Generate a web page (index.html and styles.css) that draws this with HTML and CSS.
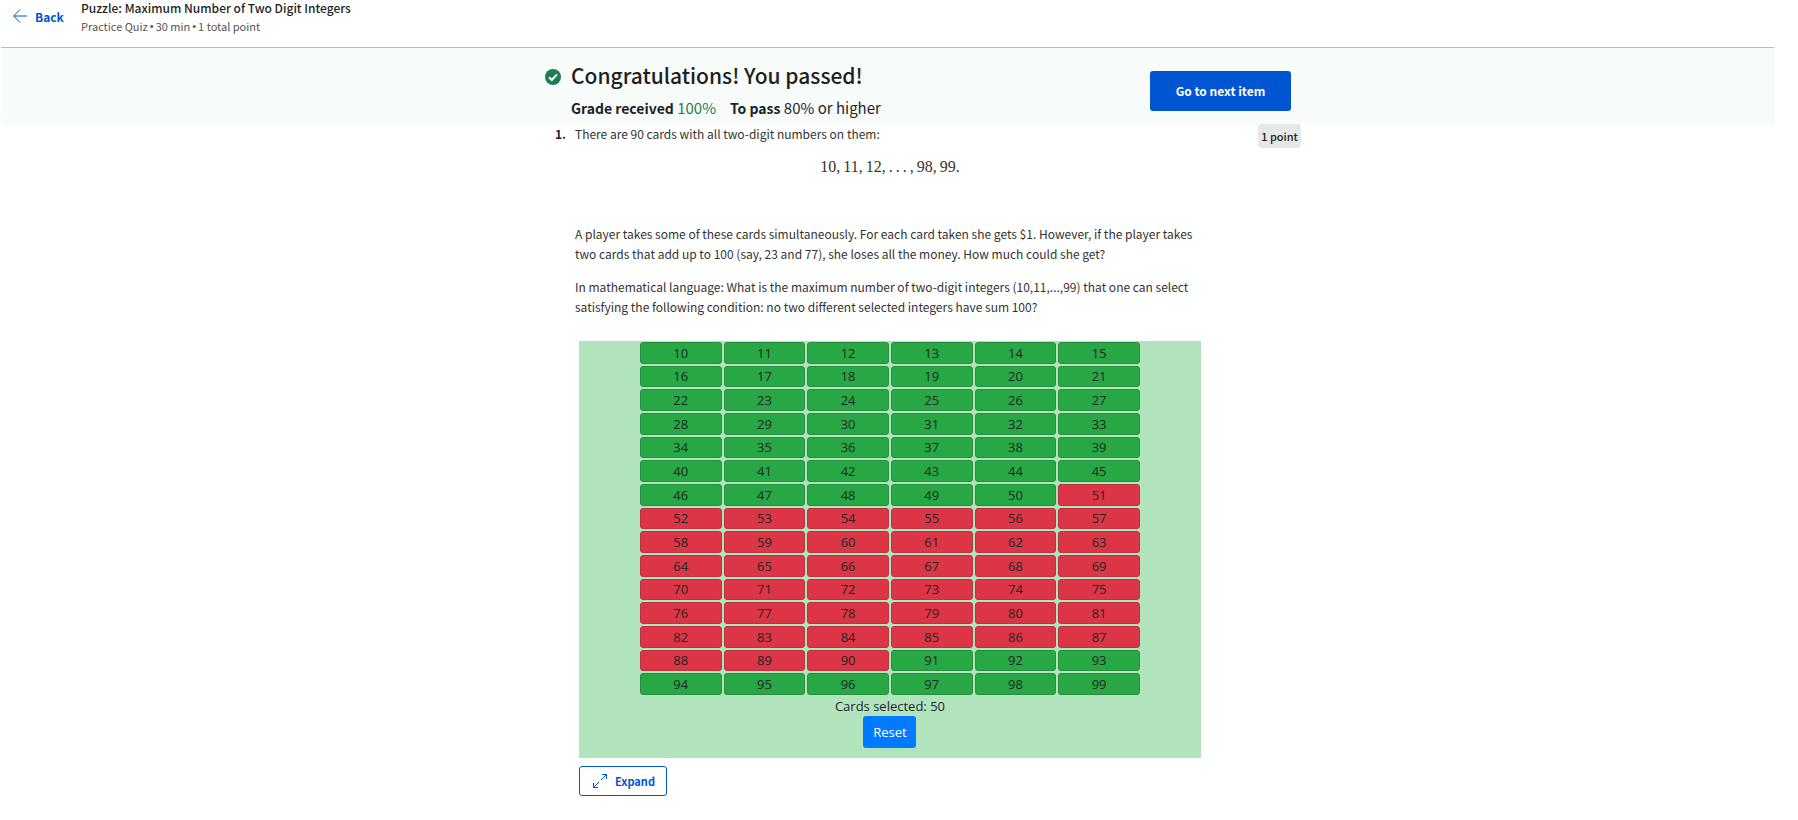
FILE: index.html
```html
<!DOCTYPE html>
<html lang="en">
<head>
<meta charset="utf-8">
<title>Puzzle: Maximum Number of Two Digit Integers</title>
<link rel="stylesheet" href="styles.css">
</head>
<body>
<header class="topbar">
  <a class="back" href="#">
    <svg class="back-icon" viewBox="0 0 14 14" aria-hidden="true"><path d="M14 7H.8M7 .5.7 7 7 13.5"/></svg>
    Back
  </a>
  <div class="title-block">
    <h1 class="title">Puzzle: Maximum Number of Two Digit Integers</h1>
    <p class="subtitle"><span>Practice Quiz</span><span class="dot">•</span><span>30 min</span><span class="dot">•</span><span>1 total point</span></p>
  </div>
</header>
<main>
  <section class="band banner">
    <div class="column banner-row">
      <svg class="check" viewBox="0 0 16 16" aria-hidden="true"><circle cx="8" cy="8" r="8"/><path d="M4 8.3 6.8 11 12 5.4"/></svg>
      <div class="result">
        <h2 class="congrats">Congratulations! You passed!</h2>
        <p class="grade"><span><b class="label">Grade received</b> <span class="score">100%</span></span><span><b class="label">To pass</b> 80% or higher</span></p>
      </div>
      <button class="next" type="button">Go to next item</button>
    </div>
  </section>
  <section class="band">
    <div class="column question">
      <span class="number">1.</span>
      <div class="body">
        <p class="text">There are 90 cards with all two-digit numbers on them:</p>
        <p class="formula"><span>10,</span><span>11,</span><span>12,</span><span>.</span><span>.</span><span>.</span><span>,</span><span>98,</span><span>99.</span></p>
        <p class="text">A player takes some of these cards simultaneously. For each card taken she gets $1. However, if the player takes<br>two cards that add up to 100 (say, 23 and 77), she loses all the money. How much could she get?</p>
        <p class="text">In mathematical language: What is the maximum number of two-digit integers (10,11,...,99) that one can select<br>satisfying the following condition: no two different selected integers have sum 100?</p>
        <div class="widget">
          <div class="panel">
            <div class="cards" id="cards"></div>
            <p class="count">Cards selected: <span id="count">50</span></p>
            <button class="reset" id="reset" type="button">Reset</button>
          </div>
          <button class="expand" type="button">
            <svg class="expand-icon" viewBox="0 0 14 14" aria-hidden="true"><path d="M9 .5h4.500V5M13.500.5 8 6M5 13.500H.5V9M.5 13.500 6 8"/></svg>
            Expand
          </button>
        </div>
      </div>
      <span class="points">1 point</span>
    </div>
  </section>
</main>
<script src="script.js"></script>
</body>
</html>
```
FILE: styles.css
```css
* {
  box-sizing: border-box;
}

body {
  margin: 0;
  padding: 0 24px 0 1px;
  background: #fff;
  color: #1f1f1f;
  font-family: "Noto Sans CJK SC", "Noto Sans", sans-serif;
  font-size: 12px;
}

h1, h2, p {
  margin: 0;
}

button {
  font-family: inherit;
  cursor: pointer;
}

.topbar {
  display: flex;
  height: 48px;
  padding-left: 12px;
  border-bottom: 1px solid #bbb;
}

.back {
  display: flex;
  align-items: center;
  gap: 8px;
  width: 68px;
  height: 32px;
  color: #0056d2;
  font-size: 12px;
  font-weight: 700;
  text-decoration: none;
}

.back-icon,
.expand-icon {
  width: 14px;
  height: 14px;
  fill: none;
  stroke: #0056d2;
}

.title {
  font-size: 12px;
  font-weight: 500;
  line-height: 16px;
}

.subtitle {
  display: flex;
  gap: 2px;
  color: #555;
  font-size: 11px;
  line-height: 20px;
}

.dot {
  font-family: "Liberation Sans", sans-serif;
}

.band {
  display: grid;
  grid-template-columns: 23fr minmax(0, 756px) 20fr;
}

.column {
  grid-column: 2;
  display: flex;
  align-items: flex-start;
}

.banner {
  background: #f7fbfa;
}

.banner-row {
  padding: 11px 10px 0 0;
}

.check {
  width: 16px;
  height: 16px;
  margin: 10px 10px 0 0;
  fill: #1d7c50;
}

.check path {
  fill: none;
  stroke: #fff;
  stroke-width: 2;
}

.result {
  flex: 1;
}

.congrats {
  font-size: 21px;
  font-weight: 500;
  line-height: 32px;
}

.grade {
  display: flex;
  gap: 14px;
  padding-top: 1px;
  font-size: 15px;
  line-height: 31px;
}

.label {
  font-size: 14px;
  font-weight: 700;
}

.score {
  color: #1d7c50;
}

.next {
  width: 141px;
  height: 40px;
  margin-top: 12px;
  padding-bottom: 3px;
  border: 0;
  border-radius: 3px;
  background: #0056d2;
  color: #fff;
  font-size: 12px;
  font-weight: 700;
}

.number {
  width: 20px;
  margin-left: 10px;
  font-weight: 700;
  line-height: 20px;
}

.body {
  flex: 1;
}

.text {
  margin-bottom: 13px;
  color: #333;
  font-size: 12px;
  line-height: 20px;
  white-space: nowrap;
}

.formula {
  display: flex;
  justify-content: center;
  gap: 3px;
  width: 630px;
  margin: 0 0 47px;
  color: #333;
  font-family: "Liberation Serif", serif;
  font-size: 16px;
  line-height: 20px;
}

.widget {
  width: 622px;
  margin: 24px 0 0 4px;
}

.panel {
  display: flex;
  flex-direction: column;
  align-items: center;
  padding: 1px 0 10px;
  background: #b1e4bd;
  color: #212529;
  font-family: "Open Sans", sans-serif;
}

.cards {
  display: grid;
  grid-template-columns: repeat(6, 1fr);
  grid-auto-rows: 1fr;
  gap: 2px;
  width: 500px;
  height: 353px;
}

.card {
  min-height: 0;
  padding: 0;
  border: 1px solid #ba3440;
  border-radius: 3px;
  background: #dc3545;
  color: #212529;
  font-size: 13px;
  line-height: 18px;
}

.card.selected {
  border-color: #26903e;
  background: #28a745;
}

.count {
  padding-top: 2px;
  font-size: 13px;
  line-height: 19px;
}

.reset {
  width: 53px;
  height: 32px;
  padding: 0;
  border: 0;
  border-radius: 3px;
  background: #007bff;
  color: #fff;
  font-size: 13px;
}

.expand {
  display: flex;
  align-items: center;
  gap: 8px;
  height: 30px;
  margin-top: 8px;
  padding: 0 11px 0 13px;
  border: 1px solid #0056d2;
  border-radius: 3px;
  background: #fff;
  color: #0056d2;
  font-size: 11px;
  font-weight: 700;
}

.points {
  padding: 0 3px;
  border-radius: 4px;
  background: #e5e7e8;
  font-size: 11px;
  font-weight: 500;
  line-height: 24px;
}
```
FILE: script.js
```js
const cards = document.getElementById("cards");
const count = document.getElementById("count");

function updateCount() {
  count.textContent = cards.querySelectorAll(".selected").length;
}

for (let n = 10; n <= 99; n++) {
  const card = document.createElement("button");
  card.type = "button";
  card.className = n <= 50 || n > 90 ? "card selected" : "card";
  card.textContent = n;
  card.addEventListener("click", () => {
    card.classList.toggle("selected");
    updateCount();
  });
  cards.append(card);
}

document.getElementById("reset").addEventListener("click", () => {
  cards.querySelectorAll(".selected").forEach((c) => c.classList.remove("selected"));
  updateCount();
});

updateCount();
```
